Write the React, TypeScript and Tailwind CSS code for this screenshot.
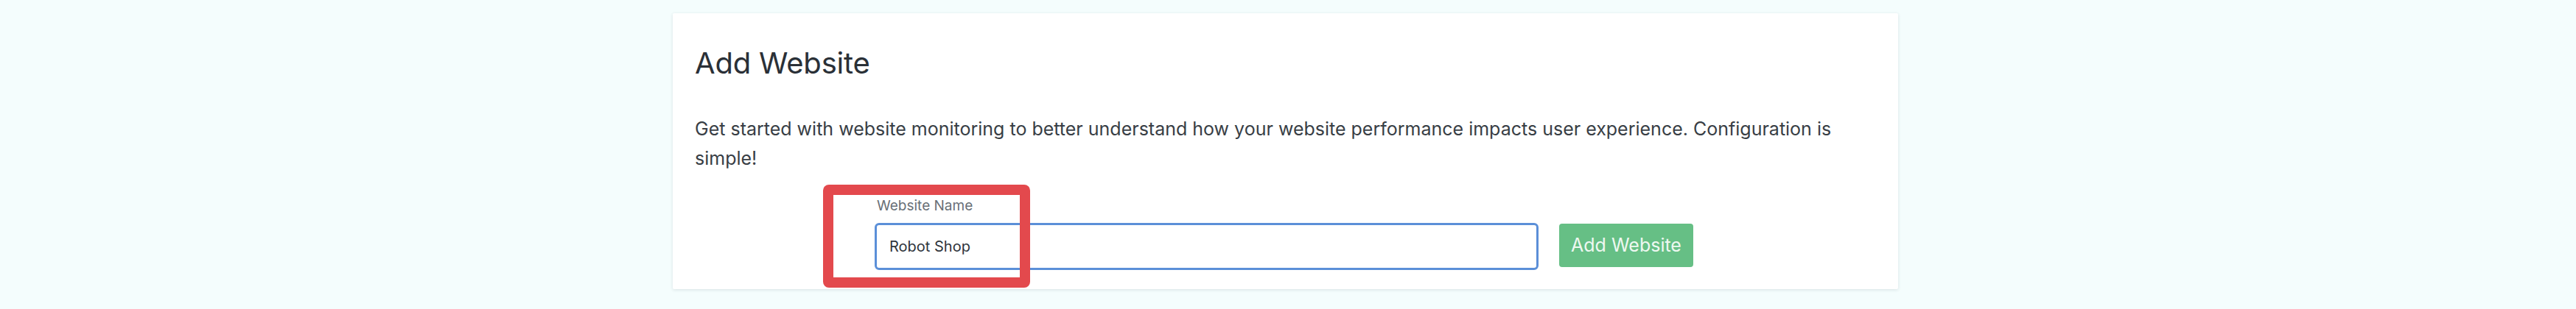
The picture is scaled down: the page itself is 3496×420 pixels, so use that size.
export default function App() {
  return (
    <div className="min-h-[420px] w-full bg-[#f4fdfd] pt-[18px] pr-[7px] font-['Inter','Noto_Sans',sans-serif]">
      <section className="relative mx-auto w-[1663px] rounded-[2px] bg-white px-[30px] pt-[44px] pb-[26px] shadow-[0_1px_4px_rgba(40,60,70,0.14)]">
        <h1 className="text-[40px] leading-[48px] font-normal tracking-[-0.2px] text-[#2a3037]">
          Add Website
        </h1>
        <p className="mt-[45px] text-[25px] leading-[40px] text-[#383e45]">
          Get started with website monitoring to better understand how your
          website performance impacts user experience. Configuration is simple!
        </p>

        <div className="mt-[33px] flex items-end justify-center gap-[28px] pr-[4px]">
          <label className="flex w-[901px] flex-col">
            <span className="pl-[3px] text-[19px] leading-[24px] text-[#697077]">
              Website Name
            </span>
            <input
              defaultValue="Robot Shop"
              className="mt-[11px] h-[64px] w-full rounded-[6px] border-[3px] border-[#5b8fd8] bg-white px-[17px] text-[20px] text-[#2f353c] outline-none"
            />
          </label>
          <button className="mb-[4px] h-[59px] w-[182px] rounded-[4px] bg-[#66bf85] text-[25px] text-[#eef8f1]">
            Add Website
          </button>
        </div>

        {/* annotation box drawn over the field */}
        <div className="absolute left-[204px] top-[233px] h-[140px] w-[281px] rounded-[8px] border-[14px] border-[#e3494d]" />
      </section>
    </div>
  );
}
